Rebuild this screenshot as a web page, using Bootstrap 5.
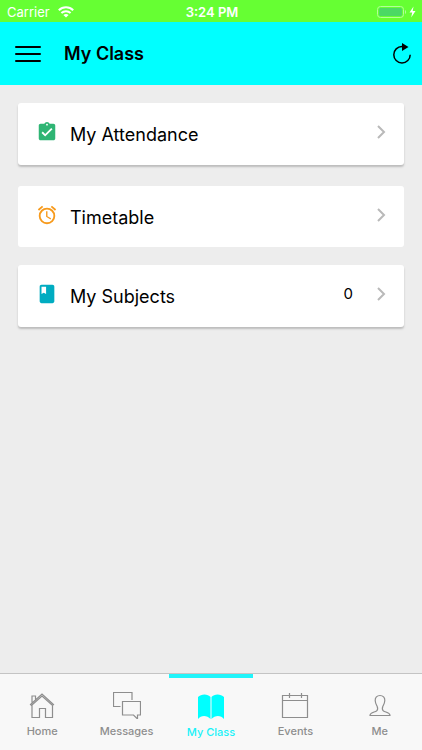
<!DOCTYPE html>
<html lang="en">
<head>
<meta charset="utf-8">
<meta name="viewport" content="width=device-width, initial-scale=1">
<title>My Class</title>
<link href="https://cdn.jsdelivr.net/npm/bootstrap@5.3.0/dist/css/bootstrap.min.css" rel="stylesheet">
<style>
  body { font-family: Inter, "Liberation Sans", sans-serif; background: #ededed; color: #000; }
  svg { display: block; flex: none; }
  .status-bar { background: #66ff33; color: #fff; height: 22px; font-size: 13px; line-height: 24px; padding: 0 5px 0 7px; }
  .status-time { font-weight: 600; }
  .app-header { background: #00ffff; height: 63px; padding: 0 10px 0 14px; }
  .app-title { font-size: 18px; line-height: 24px; font-weight: 600; margin-left: 22px; }
  .icon-button { background: none; border: 0; padding: 0; color: #000; }
  .menu-list { padding: 18px; gap: 18px; }
  .menu-item { background: #fff; color: #000; border-radius: 3px; height: 62px; padding: 0 16px 0 18px; font-size: 18px; line-height: 24px; font-weight: 400; }
  .menu-item.raised { box-shadow: 0 2px 2px #bdbdbd; }
  .menu-item.flat { height: 61px; margin-top: 3px; }
  .menu-item .menu-label { margin-left: 12px; padding-top: 2px; }
  .menu-count { font-size: 15px; margin-right: 21px; padding-bottom: 4px; }
  .menu-item .lift { margin-bottom: 4px; }
  .tab-bar { background: #f8f8f8; border-top: 1px solid #c4c4c4; height: 77px; }
  .tab-link { color: #8e8e8e; font-size: 11px; line-height: 14px; font-weight: 500; padding-top: 17px; gap: 5px; border-top: 0 solid #20f4fa; }
  .tab-link.current { color: #18f2f8; border-top-width: 4px; padding-top: 14px; }
</style>
<script src="https://cdn.jsdelivr.net/npm/bootstrap@5.3.0/dist/js/bootstrap.bundle.min.js"></script>
</head>
<body class="d-flex flex-column min-vh-100">
<div class="status-bar row g-0">
  <div class="col d-flex align-items-center gap-2">
    <span>Carrier</span>
    <svg width="16" height="12" viewBox="0 0 16 12" fill="none" stroke="#fff" stroke-width="2"><path d="M.8 4.300C4.800.3 11.200.3 15.200 4.300M3.400 7c2.600-2.500 6.600-2.500 9.200 0"/><path d="M8 11.500 5.400 9c1.400-1.300 3.800-1.300 5.200 0z" fill="#fff" stroke="none"/></svg>
  </div>
  <div class="col-auto status-time">3:24 PM</div>
  <div class="col d-flex align-items-center justify-content-end">
    <svg width="40" height="14" viewBox="0 0 40 14"><rect x=".5" y="1.500" width="26" height="11" rx="3" fill="none" stroke="#b1ff99"/><rect x="2" y="3" width="23" height="8" rx="1.500" fill="#4cd964"/><path d="M28 5c1.500.6 1.500 3.400 0 4z" fill="#b1ff99"/><path d="m36.500 1.500-4 6h2.700l-1 5 4.300-6.500h-2.800z" fill="#fff"/></svg>
  </div>
</div>
<header class="app-header d-flex align-items-center">
  <button type="button" class="icon-button" aria-label="Menu">
    <svg width="28" height="18" viewBox="0 0 28 18" stroke="#000" stroke-width="2" stroke-linecap="round"><path d="M2 2h24M2 9h24M2 16h24"/></svg>
  </button>
  <h1 class="app-title mb-0">My Class</h1>
  <button type="button" class="icon-button ms-auto" aria-label="Refresh">
    <svg width="20" height="22" viewBox="0 0 20 22"><path d="M10 3.500a8.200 8.200 0 1 0 8.200 8.200" fill="none" stroke="#000" stroke-width="1.500"/><path d="M10 0v8L16.500 4z"/></svg>
  </button>
</header>
<main class="menu-list flex-grow-1 d-flex flex-column">
  <a href="#attendance" class="menu-item raised d-flex align-items-center text-decoration-none">
    <svg class="lift" width="22" height="22" viewBox="0 0 24 24" fill="#2fb574"><path d="M19 3h-4.180C14.400 1.840 13.300 1 12 1s-2.400.84-2.820 2H5c-1.100 0-2 .9-2 2v14c0 1.100.9 2 2 2h14c1.100 0 2-.9 2-2V5c0-1.100-.9-2-2-2zm-7 0c.55 0 1 .45 1 1s-.45 1-1 1-1-.45-1-1 .45-1 1-1zm-2 14-4-4 1.410-1.410L10 14.170l6.590-6.590L18 9z"/></svg>
    <span class="menu-label">My Attendance</span>
    <svg class="lift ms-auto" width="14" height="16" viewBox="0 0 14 16" fill="none" stroke="#b9b9b9" stroke-width="2"><path d="m4 2 6 6-6 6"/></svg>
  </a>
  <a href="#timetable" class="menu-item flat d-flex align-items-center text-decoration-none">
    <svg class="lift" width="22" height="22" viewBox="0 0 24 24" fill="#f79a1c"><path d="m22 5.720-4.600-3.860-1.290 1.530 4.600 3.860zM7.880 3.390 6.600 1.860 2 5.710l1.290 1.530zM12.500 8H11v6l4.750 2.850.75-1.230-4-2.370zM12 4a9 9 0 1 0 0 18 9 9 0 0 0 0-18zm0 16a7 7 0 1 1 0-14 7 7 0 0 1 0 14z"/></svg>
    <span class="menu-label">Timetable</span>
    <svg class="lift ms-auto" width="14" height="16" viewBox="0 0 14 16" fill="none" stroke="#b9b9b9" stroke-width="2"><path d="m4 2 6 6-6 6"/></svg>
  </a>
  <a href="#subjects" class="menu-item raised d-flex align-items-center text-decoration-none">
    <svg class="lift" width="22" height="22" viewBox="0 0 24 24" fill="#00acc1"><path d="M18 2H6c-1.100 0-2 .9-2 2v16c0 1.100.9 2 2 2h12c1.100 0 2-.9 2-2V4c0-1.100-.9-2-2-2zM6 4h5v8l-2.500-1.500L6 12z"/></svg>
    <span class="menu-label">My Subjects</span>
    <span class="menu-count ms-auto">0</span>
    <svg class="lift" width="14" height="16" viewBox="0 0 14 16" fill="none" stroke="#b9b9b9" stroke-width="2"><path d="m4 2 6 6-6 6"/></svg>
  </a>
</main>
<nav class="tab-bar row g-0" aria-label="Main">
  <a href="#home" class="tab-link col d-flex flex-column align-items-center text-decoration-none">
    <svg width="28" height="28" viewBox="0 0 28 28" fill="none" stroke="#8e8e8e" stroke-width="1.200"><path d="M2.500 13.500 14 3l11.500 10.500-1 1L14 5 3.500 14.500zM4 14v12.500h7.500v-9h6v9h7V14M4 11.500V5h3.500v4"/></svg>
    <span>Home</span>
  </a>
  <a href="#messages" class="tab-link col d-flex flex-column align-items-center text-decoration-none">
    <svg width="28" height="28" viewBox="0 0 28 28" fill="none" stroke="#8e8e8e" stroke-width="1.200"><path d="M7.500 15.500h-7v-14h18.500v7.500M9.500 10.500h18v13.500h-3v4l-4-4h-11z"/></svg>
    <span>Messages</span>
  </a>
  <a href="#class" class="tab-link current col d-flex flex-column align-items-center text-decoration-none" aria-current="page">
    <svg width="28" height="28" viewBox="0 0 28 28" fill="#00ffff"><path d="M13.500 5C11 1.500 4 1.500 1 5v22c3-4 9-4 12.500 0zM14.500 5C17 1.500 24 1.500 27 5v22c-3-4-9-4-12.500 0z"/></svg>
    <span>My Class</span>
  </a>
  <a href="#events" class="tab-link col d-flex flex-column align-items-center text-decoration-none">
    <svg width="28" height="28" viewBox="0 0 28 28" fill="none" stroke="#8e8e8e" stroke-width="1.200"><path d="M1.500 4.500h25v22h-25zM1.500 9.500h25M8.500 2v5M20.500 2v5"/></svg>
    <span>Events</span>
  </a>
  <a href="#me" class="tab-link col d-flex flex-column align-items-center text-decoration-none">
    <svg width="28" height="28" viewBox="0 0 28 28" fill="none" stroke="#8e8e8e" stroke-width="1.200"><path d="M14 4.500c-3 0-5 2-4.800 5 .1 3 1.300 4.500 2 6 .6 1.500.6 3.500-.7 4.500-2 1.300-6.500 1.500-6.500 4.500h20c0-3-4.500-3.200-6.500-4.500-1.300-1-1.300-3-.7-4.500.7-1.500 1.900-3 2-6 .2-3-1.800-5-4.800-5z"/></svg>
    <span>Me</span>
  </a>
</nav>
</body>
</html>
